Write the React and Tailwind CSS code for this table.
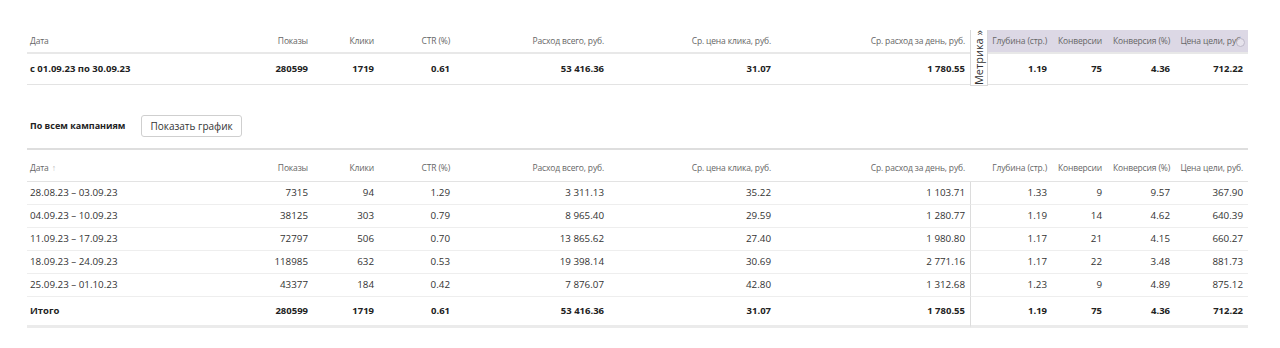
const TOP_COLS = 'grid-cols-[213px_73px_66px_76px_154px_167px_194px_18px_64px_55px_68px_73px]';
const BOTTOM_COLS = 'grid-cols-[213px_73px_66px_76px_154px_167px_194px_82px_55px_68px_73px]';

const headers = [
    'Показы',
    'Клики',
    'CTR (%)',
    'Расход всего, руб.',
    'Ср. цена клика, руб.',
    'Ср. расход за день, руб.',
];

const metrikaHeaders = ['Глубина (стр.)', 'Конверсии', 'Конверсия (%)', 'Цена цели, руб.'];

const rows = [
    ['28.08.23 – 03.09.23', '7315', '94', '1.29', '3 311.13', '35.22', '1 103.71', '1.33', '9', '9.57', '367.90'],
    ['04.09.23 – 10.09.23', '38125', '303', '0.79', '8 965.40', '29.59', '1 280.77', '1.19', '14', '4.62', '640.39'],
    ['11.09.23 – 17.09.23', '72797', '506', '0.70', '13 865.62', '27.40', '1 980.80', '1.17', '21', '4.15', '660.27'],
    ['18.09.23 – 24.09.23', '118985', '632', '0.53', '19 398.14', '30.69', '2 771.16', '1.17', '22', '3.48', '881.73'],
    ['25.09.23 – 01.10.23', '43377', '184', '0.42', '7 876.07', '42.80', '1 312.68', '1.23', '9', '4.89', '875.12'],
];

const total = ['280599', '1719', '0.61', '53 416.36', '31.07', '1 780.55', '1.19', '75', '4.36', '712.22'];

// header label style, narrower than the data
const TH = 'text-[8.5px] tracking-[-0.15px] text-[#666] whitespace-nowrap';

function TopTable() {
    return (
        <div className={`grid ${TOP_COLS}`}>
            {/* header row */}
            <div className={`h-[24px] flex items-center pl-[3px] border-b-2 border-[#e8e8e8] ${TH}`}>Дата</div>
            {headers.map((h) => (
                <div key={h} className={`h-[24px] flex items-center justify-end pr-[5px] border-b-2 border-[#e8e8e8] ${TH}`}>
                    {h}
                </div>
            ))}
            <div className="row-span-2 bg-white border-x border-b border-[#d9d9d9] flex items-center justify-center">
                <span className="[writing-mode:vertical-rl] rotate-180 text-[11px] text-[#333] whitespace-nowrap">Метрика »</span>
            </div>
            {metrikaHeaders.map((h, i) => (
                <div key={h} className={`relative h-[24px] flex items-center justify-end pr-[5px] bg-[#dcd8e5] border-b-2 border-[#e8e8e8] ${TH}`}>
                    {h}
                    {i === 3 && (
                        <span className="absolute right-[3px] top-[8px] w-[9px] h-[9px] rounded-full border border-[#bdb8c8] bg-[#e6e3ec]" />
                    )}
                </div>
            ))}

            {/* data row */}
            <div className="h-[30px] flex items-center pl-[3px] text-[9.5px] font-bold text-[#222] border-b border-[#e3e3e3]">с 01.09.23 по 30.09.23</div>
            {total.map((v, i) => (
                <div
                    key={'a' + i}
                    className={'h-[30px] flex items-center justify-end pr-[5px] text-[9.5px] font-bold text-[#222] border-b border-[#e3e3e3] ' + (i === 6 ? 'col-start-9' : '')}
                >
                    {v}
                </div>
            ))}
        </div>
    );
}

function BottomTable() {
    return (
        <div className={`grid ${BOTTOM_COLS}`}>
            {/* header */}
            <div className={`h-[32px] flex items-end pb-[6px] pl-[3px] border-b border-[#e3e3e3] ${TH}`}>
                Дата <span className="ml-[3px] text-[#bbb]">↑</span>
            </div>
            {[...headers, ...metrikaHeaders].map((h) => (
                <div key={h} className={`h-[32px] flex items-end justify-end pb-[6px] pr-[5px] border-b border-[#e3e3e3] ${TH}`}>
                    {h}
                </div>
            ))}

            {rows.map((r) =>
                r.map((v, i) => (
                    <div
                        key={r[0] + i}
                        className={
                            'h-[23px] flex items-center text-[9.8px] text-[#333] border-b border-[#eeeeee] ' +
                            (i === 0 ? 'pl-[3px] ' : 'justify-end pr-[5px] ') +
                            (i === 7 ? 'border-l border-l-[#dcdcdc]' : '')
                        }
                    >
                        {v}
                    </div>
                ))
            )}

            {/* total */}
            <div className="h-[31px] flex items-center pl-[3px] text-[9.5px] font-bold text-[#222] border-b-[3px] border-[#ebebeb]">Итого</div>
            {total.map((v, i) => (
                <div
                    key={'t' + i}
                    className={
                        'h-[31px] flex items-center justify-end pr-[5px] text-[9.5px] font-bold text-[#222] border-b-[3px] border-[#ebebeb] ' +
                        (i === 6 ? 'border-l border-l-[#dcdcdc]' : '')
                    }
                >
                    {v}
                </div>
            ))}
        </div>
    );
}

export default function App() {
    return (
        <div className="w-[1280px] h-[348px] bg-white pl-[27px] pt-[30px] font-['Open_Sans',sans-serif]">
            <TopTable />

            <div className="w-[1221px] mt-[29px] flex items-center pb-[11px] border-b-2 border-[#dedede]">
                <span className="pl-[3px] text-[9px] font-bold text-[#222]">По всем кампаниям</span>
                <button className="ml-[16px] h-[22px] px-[8px] border border-[#cfcfcf] rounded-[3px] text-[10px] text-[#333] bg-white">
                    Показать график
                </button>
            </div>

            <BottomTable />
        </div>
    );
}
